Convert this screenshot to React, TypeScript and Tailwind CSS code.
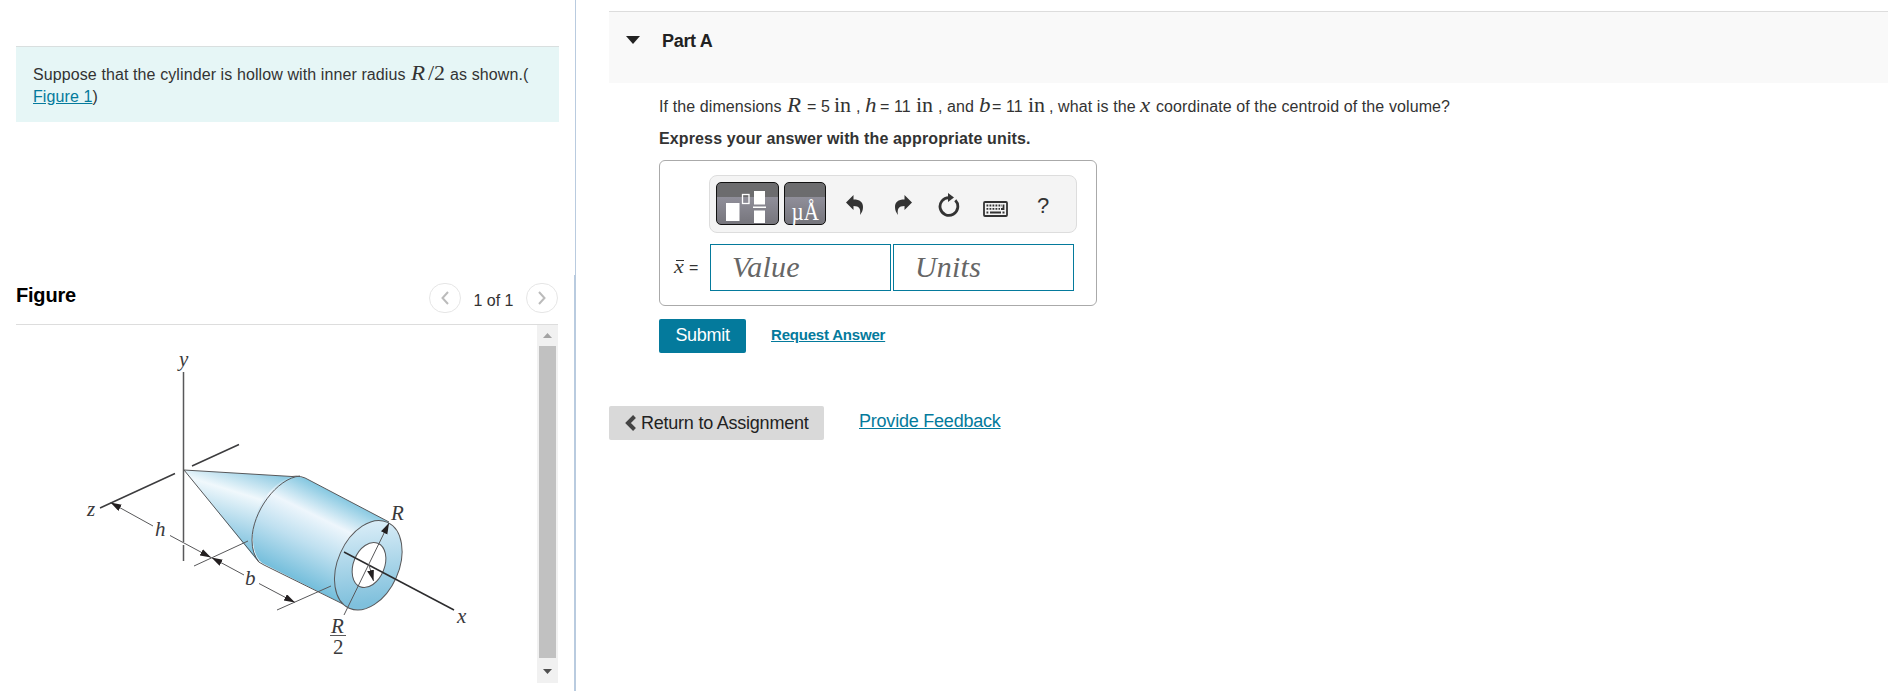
import type { ReactNode } from "react";

const sans = "font-['Liberation_Sans',Arial,sans-serif]";

function M({ children, w, up }: { children: ReactNode; w: number; up?: boolean }) {
  return (
    <span
      className="inline-block whitespace-nowrap font-['Liberation_Serif',serif] text-[20px] leading-none tracking-normal"
      style={{ width: w }}
    >
      <span className={"inline-block origin-left " + (up ? "scale-x-110" : "scale-x-115 italic")}>{children}</span>
    </span>
  );
}

// Cone + hollow cylinder, user units are page pixels
function CylinderFigure() {
  return (
    <svg viewBox="16 325 521 358" className="h-[358px] w-[521px]" fill="none" stroke="#58585a">
      <defs>
        <linearGradient id="cone" gradientUnits="userSpaceOnUse" x1="192" y1="444" x2="165" y2="531">
          <stop offset="0" stopColor="#7fc3de" />
          <stop offset="0.36" stopColor="#f0f8fc" />
          <stop offset="0.75" stopColor="#a3d3e8" />
          <stop offset="1" stopColor="#74bedb" />
        </linearGradient>
        <linearGradient id="cyl" gradientUnits="userSpaceOnUse" x1="348" y1="500" x2="306" y2="585">
          <stop offset="0" stopColor="#86c8e1" />
          <stop offset="0.3" stopColor="#eef6fc" />
          <stop offset="0.6" stopColor="#bfe0f0" />
          <stop offset="1" stopColor="#74bedb" />
        </linearGradient>
        <linearGradient id="face" gradientUnits="userSpaceOnUse" x1="345" y1="530" x2="385" y2="600">
          <stop offset="0" stopColor="#d8ecf7" />
          <stop offset="1" stopColor="#7fc0dc" />
        </linearGradient>
        <marker id="arrow" markerUnits="userSpaceOnUse" markerWidth="12" markerHeight="8" refX="11" refY="3.500" orient="auto-start-reverse">
          <path d="M0 0L11 3.500L0 7z" fill="#231f20" stroke="none" />
        </marker>
      </defs>
      <path d="M183.500 372V542M183.500 545V561" strokeWidth="1.5" />
      <path d="M192 466L239 444.500M175 473.500L100 508" stroke="#3c3c3e" strokeWidth="1.5" />
      <path d="M184 470L300 477C277 477 252 512 252 540Q252 551 259 561L255 558Z" fill="url(#cone)" stroke="none" />
      <path d="M300 477L305 478L389 522L349 607L262 563C250 553 251 528 258 510C268 488 285 475 300 477Z" fill="url(#cyl)" stroke="none" />
      <path d="M184 470L292 476.500Q301 475 309 480L389 522M184 470L255 557Q258 563 264 565L349 607" />
      <path d="M300 476C277 478 252 512 252 540Q252 554 259 562" />
      <ellipse cx="368.300" cy="565.300" rx="30.500" ry="47" transform="rotate(24 368.300 565.300)" fill="url(#face)" />
      <ellipse cx="369" cy="565" rx="15.500" ry="23.500" transform="rotate(22 369 565)" fill="#fff" />
      <path d="M344 552L454 610" stroke="#2c2c2e" strokeWidth="1.5" />
      <path d="M344 615L389 523" markerEnd="url(#arrow)" />
      <path d="M369 565L373.500 581" markerEnd="url(#arrow)" />
      <path d="M110.500 502.500L153 526" markerStart="url(#arrow)" />
      <path d="M170 535.500L211 557.500" markerEnd="url(#arrow)" />
      <path d="M211.500 557.500L244 575" markerStart="url(#arrow)" />
      <path d="M259 583.500L295 602.500" markerEnd="url(#arrow)" />
      <path d="M194 566L248 541M277 610L331 586" />
      <g fill="#3a3a3c" stroke="none" fontFamily="'Liberation Serif', serif" fontStyle="italic" fontSize="21">
        <text x="179" y="366">y</text>
        <text x="87" y="516">z</text>
        <text x="155" y="536">h</text>
        <text x="245" y="585">b</text>
        <text x="391" y="520">R</text>
        <text x="457" y="623">x</text>
        <text x="331" y="633">R</text>
        <text x="333" y="654" fontStyle="normal">2</text>
      </g>
      <path d="M330 635.500H346" />
    </svg>
  );
}

function Undo({ flip }: { flip?: boolean }) {
  return (
    <svg viewBox="0 0 18 20" className={"h-[20px] w-[18px] " + (flip ? "-scale-x-100" : "")} fill="#333">
      <path d="M0 7.500L7.500 0V4.500C14 4.500 17 7 17 12C17 15 16 17.500 14 20C15 14 13.500 11 7.500 11V15Z" />
    </svg>
  );
}

function Keyboard() {
  return (
    <svg viewBox="0 0 25 16" className="h-[16px] w-[25px]" fill="none" stroke="#333">
      <rect x="1" y="1" width="23" height="14" rx="1" strokeWidth="1.800" />
      <path d="M3.500 4.500H19M3.500 7.800H17" strokeWidth="1.800" strokeDasharray="1.800 1.200" />
      <path d="M7 11.500H18M3.500 11.500H5.300M19.500 11.500H21.500M20.500 3.600V8H18" strokeWidth="1.800" />
    </svg>
  );
}

function AnswerBox() {
  const toolBtn =
    "mb-px flex h-[43px] items-center justify-center rounded-[5px] border border-[#111] bg-[linear-gradient(#6c6c6e_0_34%,#908f9a_34%,#76757c_100%)]";
  return (
    <div className="h-[146px] w-[438px] rounded-[6px] border border-[#aaa] pl-[49px] pt-[14px]">
      <div className="flex h-[58px] w-[368px] items-center rounded-[8px] border border-[#ddd] bg-[#f4f4f4] pl-[6px]">
        <button className={toolBtn + " w-[63px]"}>
          <svg viewBox="0 0 61 41" className="h-[41px] w-[61px]" fill="#fff">
            <rect x="9" y="20" width="13.500" height="18" />
            <rect x="25.500" y="11.500" width="6.500" height="9" fill="none" stroke="#fff" strokeWidth="1.300" />
            <path d="M37 8h11v13.500H37zM36 23.500h13V25H36zM37 27.500h11V40H37z" />
          </svg>
        </button>
        <button className={toolBtn + " ml-[5px] w-[42px] pt-[16px] font-['Liberation_Serif',serif] text-[25px] leading-none text-white"}>
          <span className="inline-block scale-x-[0.84]">µÅ</span>
        </button>
        <span className="ml-[20px] mt-[2px]"><Undo /></span>
        <span className="ml-[30px] mt-[2px]"><Undo flip /></span>
        <svg viewBox="0 0 22 24" className="ml-[26px] mt-[2px] h-[24px] w-[22px]" fill="none" stroke="#333" strokeWidth="2.800">
          <path d="M17.300 7.300A8.900 8.900 0 1 1 11 4.600" />
          <path d="M10 0l6 4.500-6 4.500z" fill="#333" stroke="none" />
        </svg>
        <span className="ml-[23px] mt-[9px]"><Keyboard /></span>
        <span className="ml-[29px] mt-[3px] text-[22px] leading-none text-[#333]">?</span>
      </div>
      <div className="-ml-[35px] mt-[11px] flex items-center">
        <div className="flex w-[36px] items-baseline pb-[2px] text-[16px] leading-none text-[#333]">
          <span className="relative inline-block w-[15px] font-['Liberation_Serif',serif] text-[19px] italic leading-none">
            <span className="inline-block origin-left scale-x-115">x</span>
            <span className="absolute left-[2px] top-[3px] h-px w-[8px] bg-[#333]" />
          </span>
          =
        </div>
        <div className="flex gap-[2px] font-['Liberation_Serif',serif] text-[30px] italic leading-none tracking-[0.2px] text-[#666]">
          <div className="flex h-[47px] w-[181px] items-center border border-[#047a9c] pb-[2px] pl-[21px]">Value</div>
          <div className="flex h-[47px] w-[181px] items-center border border-[#047a9c] pb-[2px] pl-[21px]">Units</div>
        </div>
      </div>
    </div>
  );
}

export default function App() {
  return (
    <div className={"flex h-[691px] w-full overflow-hidden bg-white text-[#333] " + sans}>
      {/* Left: problem text and figure */}
      <aside className="flex w-[574px] shrink-0 flex-col pl-[16px] pt-[46px]">
        <div className="h-[76px] w-[543px] border-t border-[#d9dfdf] bg-[#e6f6f6] pl-[17px] pt-[16px] text-[16px] leading-[22px] tracking-[0.1px]">
          <div className="flex h-[23px] items-baseline whitespace-nowrap">
            <span className="w-[378px]">Suppose that the cylinder is hollow with inner radius</span>
            <M w={17}>R</M>
            <M w={22} up>/2</M>
            <span>as shown.(</span>
          </div>
          <div>
            <a className="text-[#047a9c] underline">Figure 1</a>)
          </div>
        </div>

        <div className="mt-[154px] flex h-[49px] w-[542px] items-start border-b border-[#ddd]">
          <h3 className="mt-[8px] text-[20px] font-bold leading-[22px] tracking-[-0.2px] text-black">Figure</h3>
          <div className="ml-auto mt-[7px] flex">
            <button className="flex h-[30px] w-[32px] items-center justify-center rounded-full border border-[#e6e6e6]">
              <svg viewBox="0 0 8 14" className="h-[14px] w-[8px]" fill="none" stroke="#bbb" strokeWidth="2"><path d="M7 1L1.500 7L7 13" /></svg>
            </button>
            <span className="w-[65px] pt-[8px] text-center text-[16px] leading-[20px]">1 of 1</span>
            <button className="flex h-[30px] w-[32px] items-center justify-center rounded-full border border-[#e6e6e6]">
              <svg viewBox="0 0 8 14" className="h-[14px] w-[8px]" fill="none" stroke="#bbb" strokeWidth="2"><path d="M1 1L6.500 7L1 13" /></svg>
            </button>
          </div>
        </div>

        <div className="flex h-[358px] w-[542px]">
          <CylinderFigure />
          <div className="flex w-[21px] flex-col items-center bg-[#f1f1f1]">
            <svg viewBox="0 0 9 5" className="my-[8px] h-[5px] w-[9px]" fill="#a3a3a3"><path d="M0 5L4.500 0L9 5z" /></svg>
            <div className="h-[312px] w-[17px] bg-[#c1c1c1]" />
            <svg viewBox="0 0 9 5" className="mt-[11px] h-[5px] w-[9px]" fill="#505050"><path d="M0 0L4.500 5L9 0z" /></svg>
          </div>
        </div>
      </aside>

      <div className="flex w-[2px] shrink-0 flex-col items-end">
        <div className="h-[275px] w-px bg-[#b9cbdf]" />
        <div className="w-[2px] flex-1 bg-[#b9cbdf]" />
      </div>

      {/* Right: question */}
      <main className="ml-[33px] mt-[11px] flex-1">
        <div className="mr-[5px] flex h-[72px] items-start border-t border-[#ddd] bg-[#f9f9f9] pl-[17px]">
          <svg viewBox="0 0 14 8" className="mt-[24px] h-[8px] w-[14px]" fill="#222"><path d="M0 0H14L7 8z" /></svg>
          <h2 className="ml-[22px] mt-[18px] text-[18px] font-bold leading-[22px] tracking-[-0.3px] text-[#222]">Part A</h2>
        </div>

        <div className="pl-[50px]">
          <div className="mt-[12px] flex h-[22px] items-baseline whitespace-nowrap text-[16px] leading-[22px] tracking-[0.1px]">
            <span className="w-[128px]">If the dimensions</span>
            <M w={20}>R</M>
            <span className="w-[27px]">= 5</span>
            <M w={22} up>in</M>
            <span className="w-[9px]">,</span>
            <M w={15}>h</M>
            <span className="w-[36px]">= 11</span>
            <M w={22} up>in</M>
            <span className="w-[41px]">, and</span>
            <M w={13}>b</M>
            <span className="w-[36px]">= 11</span>
            <M w={21} up>in</M>
            <span className="w-[91px]">, what is the</span>
            <M w={16}>x</M>
            <span>coordinate of the centroid of the volume?</span>
          </div>
          <p className="mt-[11px] h-[22px] text-[16px] font-bold leading-[22px] tracking-[0.13px]">Express your answer with the appropriate units.</p>
          <div className="mt-[10px]">
            <AnswerBox />
          </div>
          <div className="mt-[13px] flex items-center">
            <button className="h-[34px] w-[87px] rounded-[2px] bg-[#047a9c] pb-[2px] text-[18px] leading-[32px] tracking-[-0.3px] text-white">Submit</button>
            <a className="-mt-[2px] ml-[25px] text-[15px] font-bold leading-[20px] tracking-[-0.2px] text-[#047a9c] underline">Request Answer</a>
          </div>
        </div>

        <div className="mt-[53px] flex items-start">
          <button className="flex h-[34px] w-[215px] items-center rounded-[2px] bg-[#d9d9d9] pl-[16px] text-[18px] tracking-[-0.23px] text-[#222]">
            <svg viewBox="0 0 11 16" className="mr-[5px] h-[16px] w-[11px]" fill="none" stroke="#444" strokeWidth="4"><path d="M9.500 1.500L3 8L9.500 14.500" /></svg>
            Return to Assignment
          </button>
          <a className="ml-[35px] mt-[4px] text-[18px] leading-[22px] tracking-[-0.22px] text-[#047a9c] underline">Provide Feedback</a>
        </div>
      </main>
    </div>
  );
}
